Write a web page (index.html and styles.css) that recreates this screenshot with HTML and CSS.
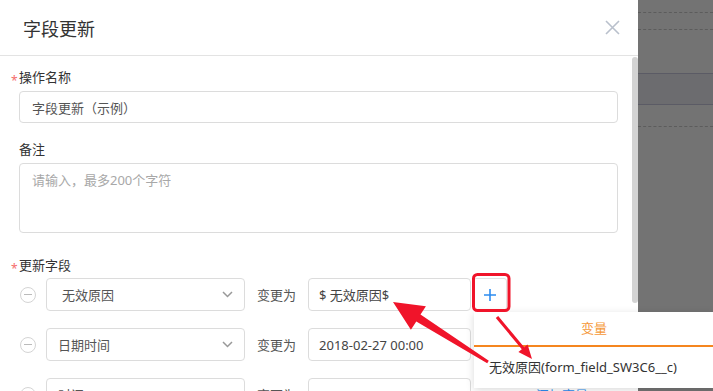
FILE: index.html
```html
<!DOCTYPE html>
<html lang="zh-CN">
<head>
    <meta charset="utf-8" />
    <title>字段更新</title>
    <link rel="stylesheet" href="styles.css">
</head>
<body>
    <div class="page">

        <!-- Dialog -->
        <div class="modal">
            <div class="modal-header">
                <h2 class="modal-title">字段更新</h2>
                <svg class="close" width="15" height="15" viewBox="0 0 15 15">
                    <path d="M1 1 L14 14 M14 1 L1 14" stroke="#b9c0cc" stroke-width="1.6" fill="none" />
                </svg>
            </div>

            <div class="modal-body">
                <form class="form">
                    <!-- Name -->
                    <div class="field">
                        <label class="label required" for="actionName">操作名称</label>
                        <input class="input" id="actionName" type="text" value="字段更新（示例）">
                    </div>

                    <!-- Remark -->
                    <div class="field field-wide">
                        <label class="label" for="remark">备注</label>
                        <textarea class="textarea" id="remark" placeholder="请输入，最多200个字符"></textarea>
                    </div>

                    <!-- Fields to update -->
                    <div class="field">
                        <label class="label label-rows required">更新字段</label>

                        <div class="rows">
                            <div class="row">
                                <span class="remove"></span>
                                <div class="select select-first">
                                    <span>无效原因</span>
                                    <svg width="11" height="7" viewBox="0 0 11 7"><path d="M1 1 L5.5 5.5 L10 1" stroke="#999" stroke-width="1.5" fill="none" /></svg>
                                </div>
                                <span class="to">变更为</span>
                                <div class="value">$ 无效原因$</div>
                                <button class="add" type="button">
                                    <svg width="12" height="12" viewBox="0 0 12 12"><path d="M6 0 V12 M0 6 H12" stroke="#2d8cf0" stroke-width="1.6" /></svg>
                                </button>
                            </div>

                            <div class="row">
                                <span class="remove"></span>
                                <div class="select">
                                    <span>日期时间</span>
                                    <svg width="11" height="7" viewBox="0 0 11 7"><path d="M1 1 L5.5 5.5 L10 1" stroke="#999" stroke-width="1.5" fill="none" /></svg>
                                </div>
                                <span class="to">变更为</span>
                                <div class="value">2018-02-27 00:00</div>
                            </div>

                            <div class="row">
                                <span class="remove"></span>
                                <div class="select">
                                    <span>时间</span>
                                    <svg width="11" height="7" viewBox="0 0 11 7"><path d="M1 1 L5.5 5.5 L10 1" stroke="#999" stroke-width="1.5" fill="none" /></svg>
                                </div>
                                <span class="to">变更为</span>
                                <div class="value value-empty">00:00</div>
                                <a class="link">添加变量</a>
                            </div>
                        </div>
                    </div>
                </form>

                <div class="scroll"><div class="thumb"></div></div>
            </div>
        </div>

        <!-- Page behind the mask -->
        <div class="backdrop">
            <div class="bd bd-1"></div>
            <div class="bd bd-2"></div>
            <div class="bd bd-3"></div>
            <div class="bd bd-4"></div>
            <div class="bd bd-5"></div>
        </div>

        <!-- Variable picker -->
        <div class="popup">
            <div class="popup-title">变量</div>
            <div class="popup-item">无效原因(form_field_SW3C6__c)</div>
        </div>

        <!-- Annotations -->
        <svg class="marks" width="713" height="391" viewBox="0 0 713 391">
            <rect x="473.5" y="274.5" width="35.5" height="36" rx="4" fill="none" stroke="#f0142a" stroke-width="3" />
            <polygon points="393,302 425.9,306.2 420.5,314.6 488.8,360.7 487.2,363.3 416.3,321.4 410.9,329.8" fill="#f0142a" />
            <polygon points="498.2,316 524.2,347.2 527.6,344.4 532,359 518.4,352 521.8,349.2 495.8,318" fill="#f0142a" />
        </svg>
    </div>
</body>
</html>
```

FILE: styles.css
```css
body {
    margin: 0;
    font-family: "Noto Sans", "Noto Sans CJK SC", sans-serif;
    font-size: 13px;
    color: #333;
}

.page {
    position: relative;
    display: flex;
    width: 713px;
    height: 391px;
    overflow: hidden;
}

/* Dialog */
.modal {
    flex: none;
    width: 638px;
    background: #fff;
}

.modal-header {
    display: flex;
    align-items: center;
    justify-content: space-between;
    height: 55px;
    padding: 0 18px 0 23px;
    border-bottom: 1px solid #e3e3e3;
}

.modal-title {
    margin: 0;
    font-size: 18px;
    font-weight: normal;
    color: #333;
}

.modal-body {
    display: flex;
    height: 335px;
}

.form {
    flex: 1;
    padding: 11px 14px 0 19px;
}

.scroll {
    width: 6px;
}

.thumb {
    margin-top: 1px;
    height: 246px;
    background: #d3d3d3;
    border-radius: 3px;
}

.field {
    margin-bottom: 16px;
}

.field-wide {
    margin-bottom: 22px;
}

.label {
    display: block;
    height: 20px;
    line-height: 20px;
    margin-bottom: 4px;
    color: #333;
}

.label-rows {
    margin-bottom: 3px;
}

.label.required {
    margin-left: -8px;
}

.label.required::before {
    content: "*";
    position: relative;
    top: 3px;
    display: inline-block;
    width: 8px;
    line-height: 12px;
    color: #f56c6c;
    font-size: 12px;
}

.input,
.textarea {
    display: block;
    width: 100%;
    box-sizing: border-box;
    border: 1px solid #dcdcdc;
    border-radius: 4px;
    padding: 0 12px;
    font: inherit;
    color: #555;
    outline: none;
}

.input {
    height: 32px;
}

.textarea {
    height: 70px;
    padding-top: 6px;
    line-height: 20px;
    resize: none;
}

.textarea::placeholder {
    color: #a8a8a8;
}

/* Field rows */
.rows {
    display: flex;
    flex-direction: column;
    gap: 17px;
}

.row {
    display: flex;
    align-items: center;
    height: 33px;
}

.remove {
    position: relative;
    flex: none;
    width: 16px;
    height: 16px;
    margin: 0 10px 0 1px;
    border: 1px solid #d4d4d4;
    border-radius: 50%;
    box-sizing: border-box;
}

.remove::after {
    content: "";
    position: absolute;
    left: 3px;
    right: 3px;
    top: 6.5px;
    height: 1px;
    background: #bbb;
}

.select {
    display: flex;
    flex: none;
    align-items: center;
    justify-content: space-between;
    width: 199px;
    height: 33px;
    box-sizing: border-box;
    padding: 0 11px;
    border: 1px solid #dcdcdc;
    border-radius: 4px;
    color: #555;
}

.select-first {
    padding-left: 15px;
}

.to {
    margin: 0 12px;
    color: #555;
}

.value {
    display: flex;
    flex: none;
    align-items: center;
    width: 163px;
    height: 33px;
    box-sizing: border-box;
    padding: 0 10px;
    border: 1px solid #dcdcdc;
    border-radius: 4px;
    color: #444;
}

.value-empty {
    color: #ccc;
}

.add {
    display: flex;
    flex: none;
    align-items: center;
    justify-content: center;
    width: 34px;
    height: 33px;
    margin-left: 2px;
    padding: 0;
    background: #fff;
    border: 1px solid #e2e2e2;
    border-radius: 3px;
}

.link {
    margin-left: 65px;
    color: #2d8cf0;
}

/* Mask over the page behind */
.backdrop {
    flex: 1;
    background: #737373;
}

.bd {
    border-bottom: 1px dashed #5c5c5c;
}

.bd-1 { height: 12px; }
.bd-2 { height: 16px; }
.bd-3 { height: 43px; border-bottom: 1px solid #5b5b65; }
.bd-4 { height: 30px; background: #6c6c6f; border-bottom: 1px solid #5b5b65; }
.bd-5 { height: 21px; }

/* Variable picker */
.popup {
    position: absolute;
    left: 474px;
    top: 312px;
    width: 240px;
    height: 76px;
    background: #fff;
    box-shadow: 0 2px 8px rgba(0, 0, 0, 0.15);
}

.popup-title {
    height: 33px;
    line-height: 33px;
    text-align: center;
    color: #f5993a;
    border-bottom: 2px solid #f5861f;
}

.popup-item {
    padding-left: 15px;
    line-height: 41px;
    color: #333;
}

.marks {
    position: absolute;
    left: 0;
    top: 0;
    pointer-events: none;
}
```
